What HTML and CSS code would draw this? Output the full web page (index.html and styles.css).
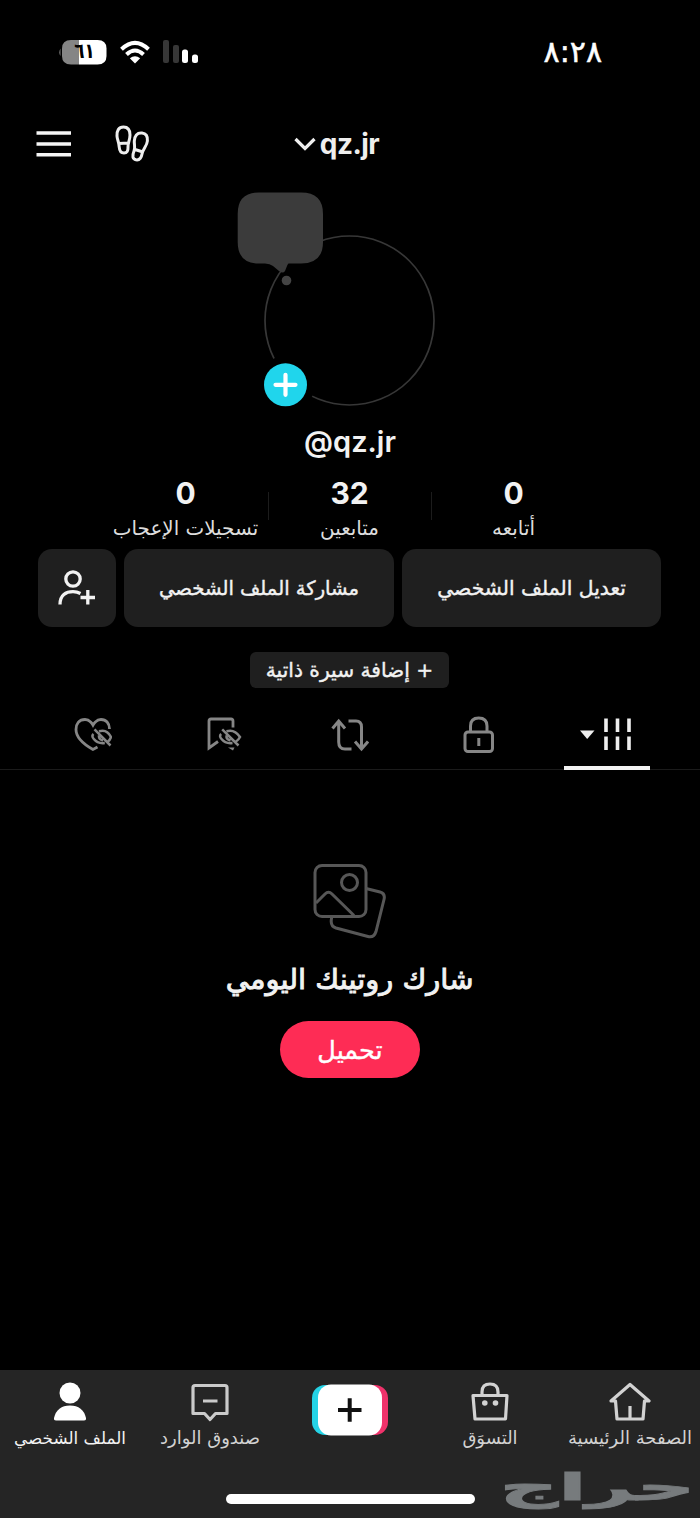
FILE: index.html
```html
<!DOCTYPE html>
<html lang="ar" dir="rtl">
<head>
<meta charset="utf-8">
<title>qz.jr</title>
<link rel="stylesheet" href="styles.css">
</head>
<body>
<header class="status">
  <span class="time">٨:٢٨</span>
  <div class="indicators">
    <svg class="signal" width="36" height="24" viewBox="0 0 36 24"><g fill="#373737"><rect x="0" y="0" width="6" height="23" rx="2"/><rect x="10" y="5" width="6" height="18" rx="2"/></g><g fill="#fff"><rect x="19" y="9.500" width="6" height="13.500" rx="2.500"/><rect x="29" y="14.500" width="6" height="8.500" rx="2.500"/></g></svg>
    <svg class="wifi" width="32" height="24" viewBox="0 0 32 24"><g fill="none" stroke="#fff" stroke-width="4"><path d="M2.500 9.200Q16-3.500 29.500 9.200"/><path d="M7.500 14.500Q16 6.500 24.500 14.500"/></g><path d="M10.800 18.300Q16 14 21.200 18.300L16 23.500Z" fill="#fff"/></svg>
    <div class="battery"><svg width="48" height="25" viewBox="0 0 48 25"><path d="M1.500 8.500Q-1 12.500 1.500 16Z" fill="#777"/><path d="M20 0H38.500Q47.500 0 47.500 8.500V16Q47.500 24.500 38.500 24.500H20Z" fill="#fff"/><path d="M20 0H12Q3 0 3 8.500V16Q3 24.500 12 24.500H20Z" fill="#858585"/></svg><span class="level">٦١</span></div>
  </div>
</header>
<nav class="top">
  <div class="account" dir="ltr"><svg width="22" height="15" viewBox="0 0 22 15"><path d="M1.500 2L11 11.500L20.500 2" fill="none" stroke="#eee" stroke-width="3.200"/></svg><span>qz.jr</span></div>
  <div class="tools" dir="ltr">
    <svg width="36" height="28" viewBox="0 0 36 28"><path d="M.5 3H35M.5 14H35M.5 24.800H35" stroke="#f5f5f5" stroke-width="3.600" fill="none"/></svg>
    <svg width="36" height="38" viewBox="0 0 36 38" fill="none" stroke="#eee" stroke-width="3"><path d="M9.500 2C4.500 2 2.700 6 3 11C3.200 15 5 17 5.200 22C5.500 26.500 7 28 10 28C13 28 14.200 26 14 22C13.800 18 16 15 16 10C16 5 14 2 9.500 2ZM5 18.500L14.300 18"/><path d="M28 8C23 7.500 20.500 11 20.300 16C20.100 20 21.500 22 20 26C18 31 18.500 34 22 34.800C26 35.500 27.500 32 28 29C28.800 24 33 21 33.400 16C33.800 11 32 8.400 28 8ZM21 24.500L29 27"/></svg>
  </div>
</nav>
<section class="profile">
  <div class="avatar">
    <svg class="ring" width="200" height="220" viewBox="0 0 200 220"><circle cx="112.500" cy="128.500" r="84.500" fill="none" stroke="#373737" stroke-width="1.700"/><path d="M22 .5H64Q86 .5 86 22V50Q86 71.500 64 71.500H51L48 79Q46 82 42 79L36 74Q33 71.500 28 71.500H22Q.7 71.500 .7 50V22Q.7 .5 22 .5Z" fill="#3b3b3b"/><circle cx="49.500" cy="88.500" r="4.800" fill="#444"/><circle cx="48.500" cy="193" r="29" fill="#000"/><circle cx="48.500" cy="192.800" r="21.500" fill="#20d5ec"/><path d="M38.500 192.800H58.500M48.500 182.800V202.800" stroke="#fff" stroke-width="4.200" stroke-linecap="round"/></svg>
  </div>
  <h1 class="handle" dir="ltr">@qz.jr</h1>
  <div class="stats">
    <div class="stat"><b>0</b><span class="t t-following">أتابعه</span></div>
    <div class="stat lined"><b>32</b><span class="t t-followers">متابعين</span></div>
    <div class="stat"><b>0</b><span class="t t-likes">تسجيلات الإعجاب</span></div>
  </div>
  <div class="actions">
    <button class="edit"><span class="t t-edit">تعديل الملف الشخصي</span></button>
    <button class="share"><span class="t t-share">مشاركة الملف الشخصي</span></button>
    <button class="add"><svg width="38" height="36" viewBox="0 0 38 36" fill="none" stroke="#f2f2f2" stroke-width="3.300"><circle cx="15" cy="9" r="7.200"/><path d="M2 34.500C2 25 8 21.700 15 21.700Q19 21.700 22.500 23.500M22.500 27.500H37M29.800 20V34.500"/></svg></button>
  </div>
  <button class="bio"><span class="t t-bio">+ إضافة سيرة ذاتية</span></button>
</section>
<nav class="tabs">
  <div class="tab active"><svg width="54" height="34" viewBox="0 0 54 34"><path d="M0 12.500H14.500L7.200 21Z" fill="#eee"/><path d="M26 .5V14M37.500 .5V14M49 .5V14M26 18.500V32M37.500 18.500V32M49 18.500V32" stroke="#eee" stroke-width="3.600"/></svg></div>
  <div class="tab"><svg width="32" height="38" viewBox="0 0 32 38" fill="none" stroke="#868686" stroke-width="3"><rect x="2" y="16" width="27.500" height="19.500" rx="3"/><path d="M7.500 16V10Q7.500 2 15.700 2Q24 2 24 10V16M15.800 22V30"/></svg></div>
  <div class="tab"><svg width="38" height="34" viewBox="0 0 38 34" fill="none" stroke="#868686" stroke-width="3"><path d="M1.500 10.500L7.700 3L14 10.500M7.700 4V24Q7.700 31 14 31H20.500M17.500 3H25Q30.500 3 30.500 9V30M24 23.500L30.500 31L37 23.500"/></svg></div>
  <div class="tab saved"><svg width="36" height="36" viewBox="0 0 36 36" fill="none" stroke="#868686" stroke-width="2.800"><path d="M27 10.500V4Q27 2 25 2H5Q3 2 3 4V31L12 24.500"/><path d="M22 30.500H28.500L27 33.500Z" fill="#868686" stroke="none"/><path d="M16.200 12.300L32.500 28.500M20.500 14.300Q28.500 11.800 34 20Q32.500 23 30 24.500M15.200 17Q12.800 19 15.500 22Q19.500 27 26.500 26M20.500 18.500Q20 22.500 24.500 23.500" stroke-width="2.500"/></svg></div>
  <div class="tab"><svg width="38" height="36" viewBox="0 0 38 36" fill="none" stroke="#868686" stroke-width="2.800"><path d="M35.500 12C35.500 6 32 2.500 27 2.500C22 2.500 19 8 19 8C19 8 16 2.500 11 2.500C5 2.500 2 7 2 12.500C2 21.500 11 28 19 32.500L23.500 30"/><path d="M20.500 12.300L36.500 28.500M25 14.300Q33 11.800 37 20Q36 23 34 24.500M19.500 17Q17.200 19 19.800 22Q23.800 27 30.800 26M25 18.500Q24.500 22.500 29 23.500" stroke-width="2.500"/></svg></div>
</nav>
<main class="empty">
  <svg width="74" height="76" viewBox="0 0 74 76" fill="none" stroke="#575757" stroke-width="3"><rect x="2" y="2.500" width="51" height="51" rx="7"/><circle cx="36.500" cy="19.500" r="8"/><path d="M3 40L12 31Q15.500 27.500 19 31L41 52.500M53 25.500L67 29Q72.500 30.500 71 36.500L63 68.500Q61 75 55 73.500L23 65Q17 63 18.500 55.500V53.500"/></svg>
  <h2><span class="t t-prompt">شارك روتينك اليومي</span></h2>
  <button class="upload"><span class="t t-upload">تحميل</span></button>
</main>
<footer class="dock">
  <div class="items">
    <div class="item"><svg width="42" height="40" viewBox="0 0 42 40" fill="none" stroke="#d2d2d2" stroke-width="3.200" stroke-linejoin="round"><path d="M6.500 19H2L21 2.500L40 19H35.500L34 37H8ZM21 24V37"/></svg><span class="t t-home">الصفحة الرئيسية</span></div>
    <div class="item"><svg width="38" height="40" viewBox="0 0 38 40" fill="none" stroke="#d2d2d2" stroke-width="3.200" stroke-linejoin="round"><path d="M2 13.500H36L34.500 37H4Z"/><path d="M11 13V10Q11 2 19 2Q27 2 27 10V13"/><g fill="#d2d2d2" stroke="none"><circle cx="13.800" cy="21" r="2.800"/><circle cx="24.500" cy="21" r="2.800"/></g></svg><span class="t t-shop">التسوَق</span></div>
    <div class="item create"><svg width="76" height="52" viewBox="0 0 76 52"><rect x="0" y="1" width="60" height="50" rx="13" fill="#25d3e6"/><rect x="17" y="1" width="59" height="50" rx="13" fill="#f0326b"/><rect x="6" y=".5" width="64" height="51" rx="13" fill="#fff"/><path d="M26 26H49.500M37.700 14.300V37.700" stroke="#111" stroke-width="4"/></svg></div>
    <div class="item"><svg width="38" height="40" viewBox="0 0 38 40" fill="none" stroke="#cacaca" stroke-width="3.200" stroke-linejoin="round"><path d="M4 3.500H34Q36 3.500 36 5.500V31.500H24.500L19 37.500L13.500 31.500H2V5.500Q2 3.500 4 3.500ZM12 19H26.500"/></svg><span class="t t-inbox">صندوق الوارد</span></div>
    <div class="item on"><svg width="34" height="40" viewBox="0 0 34 40" fill="#fff"><circle cx="17" cy="11" r="10.500"/><path d="M1 36Q4 23.500 17 23.500Q30 23.500 33 36Q33.300 38.500 31 38.500H3Q.7 38.500 1 36Z"/></svg><span class="t t-me">الملف الشخصي</span></div>
  </div>
  <div class="home-bar"></div>
  <span class="mark t">حراج</span>
</footer>
</body>
</html>
```
FILE: styles.css
```css
* { box-sizing: border-box; }
body { margin: 0; width: 700px; height: 1518px; overflow: hidden; background: #000; color: #f2f2f2; display: flex; flex-direction: column; font-family: "DejaVu Sans", sans-serif; }
svg { display: block; flex: none; }
button { border: 0; margin: 0; padding: 0; color: inherit; font: inherit; background: #1f1f1f; display: flex; align-items: center; justify-content: center; }
h1, h2 { margin: 0; }
.t { white-space: nowrap; display: block; }

.status { height: 104px; padding: 0 98px 0 59px; display: flex; align-items: center; justify-content: space-between; }
.time { font-size: 30px; line-height: 34px; color: #fff; -webkit-text-stroke: .5px #fff; }
.indicators { display: flex; align-items: center; gap: 12px; }
.battery { display: grid; }
.battery > * { grid-area: 1 / 1; }
.level { color: #000; font-size: 21px; font-weight: 700; line-height: 23px; text-align: center; padding-left: 4px; transform: scaleX(.8); }

.top { height: 80px; display: grid; grid-template-columns: 194px 312px 194px; align-items: center; }
.account { grid-column: 2; display: flex; align-items: center; justify-content: center; gap: 4px; font: 700 28px Inter, sans-serif; letter-spacing: -.5px; color: #eee; padding-right: 27px; }
.tools { grid-column: 3; display: flex; gap: 42px; align-items: center; padding-left: 36px; }

.profile { display: flex; flex-direction: column; align-items: center; height: 516px; }
.avatar { display: flex; direction: ltr; height: 238px; padding-top: 8px; width: 226px; }
.handle { font: 600 29px/40px Inter, sans-serif; height: 54px; }
.stats { display: flex; height: 73px; margin-right: 1px; }
.stat { width: 164px; display: flex; flex-direction: column; align-items: center; }
.stat b { font: 700 30px/34px Inter, sans-serif; }
.stat .t { font-size: 19.900px; line-height: 38px; color: #ddd; }
.lined { background: linear-gradient(#1c1c1c, #1c1c1c) 0 16px / 1px 28px no-repeat, linear-gradient(#1c1c1c, #1c1c1c) 100% 16px / 1px 28px no-repeat; }
.actions { display: flex; gap: 8px; height: 78px; width: 623px; margin-right: 1px; -webkit-text-stroke: .4px #f2f2f2; }
.actions button { border-radius: 14px; }
.edit { width: 259px; font-size: 20.300px; }
.share { width: 270px; font-size: 19.600px; }
.add { width: 78px; }
.bio { margin: 25px 1px 0 0; width: 199px; height: 36px; border-radius: 6px; font-size: 20.200px; -webkit-text-stroke: .4px #f2f2f2; }

.tabs { height: 70px; display: flex; padding: 0 50px; justify-content: space-between; border-bottom: 1px solid #1b1b1b; }
.tab { width: 86px; display: flex; align-items: center; justify-content: center; }
.active { border-bottom: 4px solid #f2f2f2; padding-top: 3px; margin-bottom: -1px; }
.saved { padding-left: 5px; }

.empty { flex: 1; display: flex; flex-direction: column; align-items: center; padding-top: 93px; }
.empty h2 { font-size: 28px; line-height: 38px; margin-top: 22px; height: 60px; font-weight: 400; -webkit-text-stroke: .9px #f2f2f2; transform: scaleX(1.035); }
.upload { width: 140px; height: 57px; border-radius: 29px; background: #fe2c55; color: #fff; font-size: 25.500px; -webkit-text-stroke: .4px #fff; }

.dock { height: 148px; background: #252525; display: flex; flex-direction: column; position: relative; }
.items { display: flex; height: 124px; padding-top: 12px; }
.item { width: 140px; display: flex; flex-direction: column; align-items: center; color: #d2d2d2; font-size: 18px; line-height: 32px; }
.on { color: #f2f2f2; font-size: 16.800px; }
.create { padding-top: 2px; }
.home-bar { width: 249px; height: 10px; border-radius: 5px; background: #fff; margin: 0 auto; }
.mark { position: absolute; right: 5px; bottom: 12px; color: #777b7d; font-size: 40px; line-height: 40px; font-weight: 700; transform: scale(2.030, .93); transform-origin: right bottom; -webkit-text-stroke: 1px #777b7d; }
```
